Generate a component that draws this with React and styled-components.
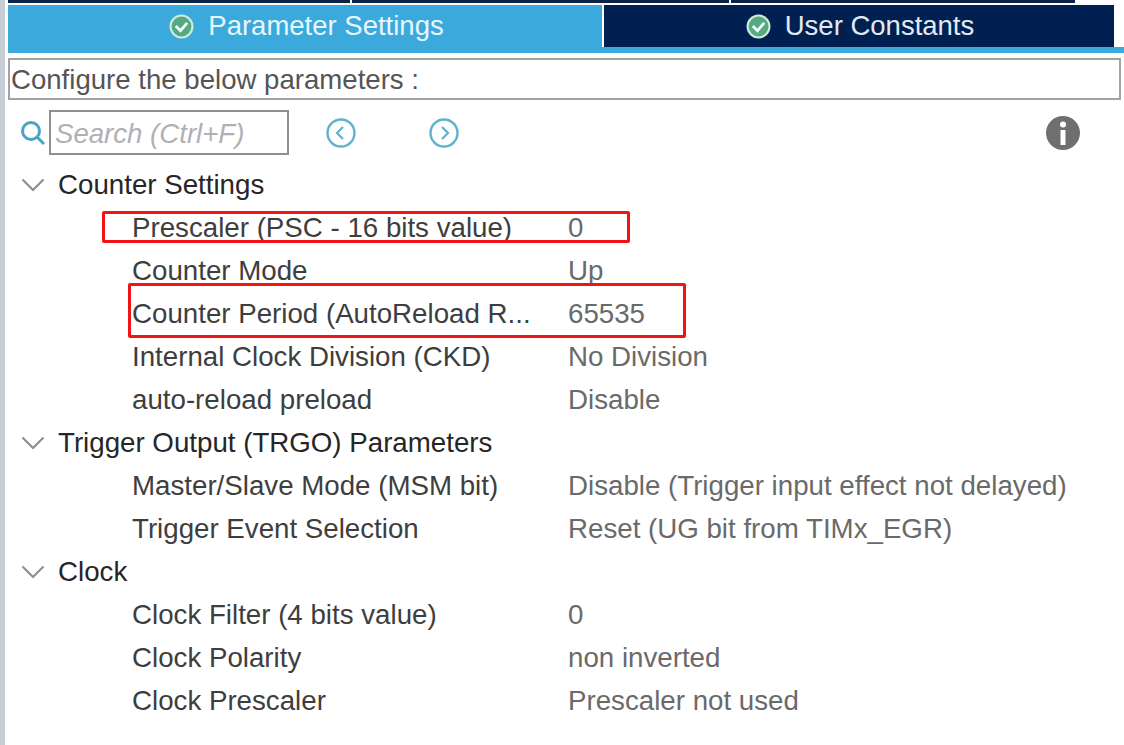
import styled, { createGlobalStyle } from "styled-components";

const Global = createGlobalStyle`
  html, body { margin: 0; padding: 0; background: #fff; }
  body { font-family: "Liberation Sans", Arial, sans-serif; }
`;

const Page = styled.div`
  width: 1124px;
  height: 745px;
  overflow: hidden;
  display: flex;
  background: #fff;
`;
const LeftEdge = styled.div`
  width: 5px;
  flex: none;
  background: #c6ced8;
`;
const Main = styled.div`
  flex: 1;
  min-width: 0;
  padding-left: 3px;
`;
const TopStrip = styled.div`
  height: 3px;
  display: flex;
  gap: 2px;
  margin-bottom: 2px;
  padding-right: 47px;
`;
const StripPiece = styled.div`
  width: ${(p) => p.$w}px;
  background: #0a2347;
`;
const TabBar = styled.div`
  display: flex;
  height: 48px;
  background: linear-gradient(to bottom, #fff 42px, #3ba9dc 42px);
`;
const Tab = styled.div`
  width: ${(p) => p.$w}px;
  height: ${(p) => p.$h}px;
  margin-right: ${(p) => p.$gap || 0}px;
  background: ${(p) => p.$bg};
  color: ${(p) => p.$color};
  display: flex;
  justify-content: center;
  align-items: flex-start;
  gap: 14px;
  padding-top: 5px;
  padding-left: ${(p) => p.$shift || 0}px;
  box-sizing: border-box;
  font-size: 27.5px;
  line-height: 32px;
  white-space: nowrap;
`;
const TabIcon = styled.svg`
  width: 25px;
  height: 25px;
  margin-top: 4px;
  flex: none;
`;
const ConfigBox = styled.div`
  margin-top: 5px;
  margin-right: 3px;
  height: 42px;
  box-sizing: border-box;
  border: 2px solid #a2a2a2;
  padding-left: 1px;
  font-size: 27.6px;
  line-height: 40px;
  color: #555;
  white-space: nowrap;
`;
const SearchRow = styled.div`
  display: flex;
  align-items: center;
  height: 45px;
  margin-top: 10px;
  padding-left: 11px;
`;
const SearchBox = styled.div`
  width: 240px;
  height: 45px;
  box-sizing: border-box;
  border: 2px solid #8f8f8f;
  margin-left: 3px;
  padding-left: 4px;
  font-size: 27.6px;
  line-height: 43px;
  font-style: italic;
  color: #b0b0b5;
  white-space: nowrap;
`;
const RoundBtn = styled.svg`
  width: 32px;
  height: 32px;
  flex: none;
  margin-left: ${(p) => p.$left}px;
`;
const InfoIcon = styled.svg`
  width: 36px;
  height: 36px;
  flex: none;
  margin-left: auto;
  margin-right: 43px;
`;
const Tree = styled.div`
  margin-top: 8px;
`;
const GroupRow = styled.div`
  height: 43px;
  display: flex;
  align-items: center;
  font-size: 27.7px;
  color: #262626;
  white-space: nowrap;
`;
const Chevron = styled.svg`
  width: 24px;
  height: 14px;
  margin-left: 13px;
  margin-right: 13px;
  flex: none;
`;
const ParamRow = styled.div`
  position: relative;
  height: 43px;
  display: flex;
  align-items: center;
  padding-left: 124px;
  font-size: 27.7px;
  white-space: nowrap;
`;
const ParamLabel = styled.div`
  width: 436px;
  flex: none;
  color: #3e3e3e;
`;
const ParamValue = styled.div`
  color: #6a6a6a;
`;
const Highlight = styled.div`
  position: absolute;
  left: ${(p) => p.$left}px;
  top: ${(p) => p.$top}px;
  width: ${(p) => p.$w}px;
  height: ${(p) => p.$h}px;
  box-sizing: border-box;
  border: 3px solid #f01414;
  border-radius: 2px;
  pointer-events: none;
`;

const groups = [
  {
    title: "Counter Settings",
    rows: [
      { label: "Prescaler (PSC - 16 bits value)", value: "0", box: { left: 94, top: 5, w: 528, h: 32 } },
      { label: "Counter Mode", value: "Up" },
      { label: "Counter Period (AutoReload R...", value: "65535", box: { left: 120, top: -9, w: 558, h: 55 } },
      { label: "Internal Clock Division (CKD)", value: "No Division" },
      { label: "auto-reload preload", value: "Disable" },
    ],
  },
  {
    title: "Trigger Output (TRGO) Parameters",
    rows: [
      { label: "Master/Slave Mode (MSM bit)", value: "Disable (Trigger input effect not delayed)" },
      { label: "Trigger Event Selection", value: "Reset (UG bit from TIMx_EGR)" },
    ],
  },
  {
    title: "Clock",
    rows: [
      { label: "Clock Filter (4 bits value)", value: "0" },
      { label: "Clock Polarity", value: "non inverted" },
      { label: "Clock Prescaler", value: "Prescaler not used" },
    ],
  },
];

const CheckIcon = () => (
  <TabIcon viewBox="0 0 24 24">
    <circle cx="12" cy="12" r="11.5" fill="#cfeed6" />
    <circle cx="12" cy="12" r="9.5" fill="#57a884" />
    <path d="M6.5 11.5 L11 16 L17.5 8.5" fill="none" stroke="#f2fff8" strokeWidth="2.6" />
  </TabIcon>
);

const ArrowButton = ({ left, d }) => (
  <RoundBtn $left={left} viewBox="0 0 32 32">
    <circle cx="16" cy="16" r="13.5" fill="none" stroke="#5fb3cf" strokeWidth="2.4" />
    <path d={d} fill="none" stroke="#5fb3cf" strokeWidth="2.2" />
  </RoundBtn>
);

export default function App() {
  return (
    <Page>
      <Global />
      <LeftEdge />
      <Main>
        <TopStrip>
          <StripPiece $w={342} />
          <StripPiece $w={377} />
          <StripPiece $w={344} />
        </TopStrip>
        <TabBar>
          <Tab $w={594} $h={48} $gap={2} $bg="#3ba9dc" $color="#e8f6fc" $shift={3}>
            <CheckIcon />
            Parameter Settings
          </Tab>
          <Tab $w={510} $h={42} $bg="#002052" $color="#e3e9f0" $shift={2}>
            <CheckIcon />
            User Constants
          </Tab>
        </TabBar>
        <ConfigBox>Configure the below parameters :</ConfigBox>
        <SearchRow>
          <svg width="27" height="27" viewBox="0 0 27 27">
            <circle cx="12" cy="12" r="8.5" fill="none" stroke="#4ba3c7" strokeWidth="3" />
            <path d="M18 18 L25 25" stroke="#4ba3c7" strokeWidth="3" />
          </svg>
          <SearchBox>Search (Ctrl+F)</SearchBox>
          <ArrowButton left={36} d="M18 10 L12 16 L18 22" />
          <ArrowButton left={71} d="M14 10 L20 16 L14 22" />
          <InfoIcon viewBox="0 0 36 36">
            <circle cx="18" cy="18" r="17" fill="#6f6f6f" />
            <circle cx="18" cy="9.5" r="3" fill="#fff" />
            <rect x="15.5" y="15" width="5" height="15" fill="#fff" />
          </InfoIcon>
        </SearchRow>
        <Tree>
          {groups.map((g) => (
            <div key={g.title}>
              <GroupRow>
                <Chevron viewBox="0 0 24 14">
                  <path d="M1.5 1.5 L12 12 L22.5 1.5" fill="none" stroke="#8a8f96" strokeWidth="2.2" />
                </Chevron>
                {g.title}
              </GroupRow>
              {g.rows.map((r) => (
                <ParamRow key={r.label}>
                  <ParamLabel>{r.label}</ParamLabel>
                  <ParamValue>{r.value}</ParamValue>
                  {r.box && <Highlight $left={r.box.left} $top={r.box.top} $w={r.box.w} $h={r.box.h} />}
                </ParamRow>
              ))}
            </div>
          ))}
        </Tree>
      </Main>
    </Page>
  );
}
